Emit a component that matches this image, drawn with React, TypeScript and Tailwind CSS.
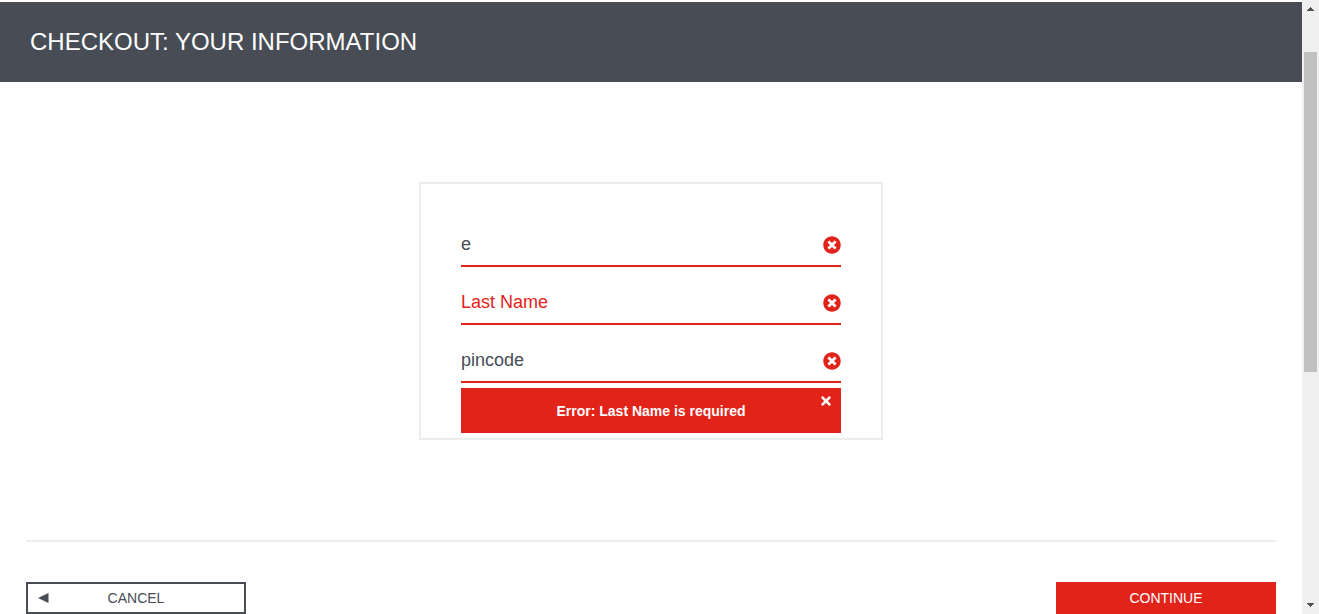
import { useState } from 'react';
import { FaTimes, FaTimesCircle } from 'react-icons/fa';

type FieldProps = {
  id: string;
  label: string;
  value: string;
  onChange: (value: string) => void;
};

function Field({ id, label, value, onChange }: FieldProps) {
  return (
    <div className="flex h-[43px] items-center border-b-2 border-[#e2231a]">
      <input
        id={id}
        type="text"
        aria-label={label}
        placeholder={label}
        value={value}
        onChange={(event) => onChange(event.target.value)}
        className="min-w-0 flex-1 bg-transparent pb-0.5 text-lg leading-6 text-[#474c55] outline-none placeholder:text-[#e2231a]"
      />
      <FaTimesCircle aria-hidden="true" className="size-[18px] shrink-0 text-[#e2231a]" />
    </div>
  );
}

function Scrollbar() {
  return (
    <div aria-hidden="true" className="flex w-[17px] shrink-0 flex-col items-center justify-between bg-[#f0f0f0] pt-[7px] pb-[7px]">
      <div className="flex w-full flex-col items-center gap-[41px]">
        <svg width="7" height="4" viewBox="0 0 7 4" shapeRendering="crispEdges" fill="#505050">
          <path d="M3 0h1v1h1v1h1v1h1v1H0V3h1V2h1V1h1z" />
        </svg>
        <div className="h-80 w-[13px] bg-[#c1c1c1]" />
      </div>
      <svg width="7" height="4" viewBox="0 0 7 4" shapeRendering="crispEdges" fill="#505050">
        <path d="M0 0h7v1H6v1H5v1H4v1H3V3H2V2H1V1H0z" />
      </svg>
    </div>
  );
}

export default function App() {
  const [firstName, setFirstName] = useState('e');
  const [lastName, setLastName] = useState('');
  const [postalCode, setPostalCode] = useState('pincode');
  const [showError, setShowError] = useState(true);

  return (
    <div className="flex min-h-screen bg-white font-['Liberation_Sans',Arial,sans-serif] text-[#474c55]">
      <main className="min-w-0 flex-1 pt-0.5">
        <header className="flex h-20 items-center bg-[#474c55] px-[30px]">
          <h1 className="text-2xl text-white">CHECKOUT: YOUR INFORMATION</h1>
        </header>

        <form className="px-[26px] pt-[100px]" onSubmit={(event) => event.preventDefault()}>
          <div className="mx-auto max-w-[464px] border-2 border-[#ededed] px-10 pt-10 pb-[5px]">
            <div className="flex flex-col gap-[15px]">
              <Field id="first-name" label="First Name" value={firstName} onChange={setFirstName} />
              <Field id="last-name" label="Last Name" value={lastName} onChange={setLastName} />
              <Field id="postal-code" label="Zip/Postal Code" value={postalCode} onChange={setPostalCode} />
            </div>
            {showError && (
              <div role="alert" className="relative mt-[5px] flex h-[45px] items-center justify-center bg-[#e2231a] text-white">
                <h3 className="text-sm font-bold">Error: Last Name is required</h3>
                <button
                  type="button"
                  aria-label="Dismiss error"
                  onClick={() => setShowError(false)}
                  className="absolute top-1.5 right-2 flex size-[14px] items-center justify-center"
                >
                  <FaTimes className="size-[14px]" />
                </button>
              </div>
            )}
          </div>

          <div className="mt-[100px] flex justify-between border-t-2 border-[#ededed] pt-10">
            <button
              type="button"
              className="grid h-8 w-[220px] grid-cols-[1fr_auto_1fr] items-center border-2 border-[#474c55] px-2.5 text-sm"
            >
              <svg width="11" height="10" viewBox="0 0 11 10" fill="#474c55" aria-hidden="true">
                <path d="M0 5 10.5 0v10z" />
              </svg>
              CANCEL
            </button>
            <button type="submit" className="h-8 w-[220px] bg-[#e2231a] text-sm text-white">
              CONTINUE
            </button>
          </div>
        </form>
      </main>
      <Scrollbar />
    </div>
  );
}
